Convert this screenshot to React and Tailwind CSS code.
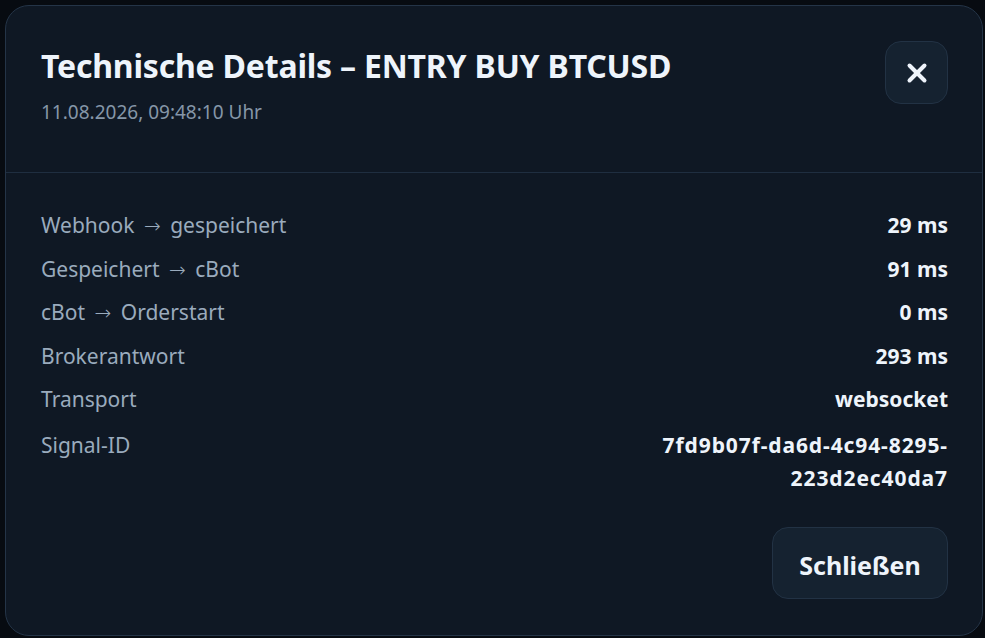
import React from 'react'
import { X } from 'lucide-react'

const rows = [
  { from: 'Webhook', to: 'gespeichert', value: '29 ms' },
  { from: 'Gespeichert', to: 'cBot', value: '91 ms' },
  { from: 'cBot', to: 'Orderstart', value: '0 ms' },
  { from: 'Brokerantwort', value: '293 ms' },
  { from: 'Transport', value: 'websocket' },
  { from: 'Signal-ID', value: '7fd9b07f-da6d-4c94-8295-223d2ec40da7', id: true },
]

export default function App() {
  return (
    <div
      className="min-h-screen bg-[#070b11] p-[5px] text-[#eef4fb]"
      style={{ fontFamily: '"Noto Sans", "Open Sans", sans-serif' }}
    >
      <div className="h-[631px] w-[978px] rounded-[24px] border border-[#243447] bg-[#0f1824] flex flex-col">
        {/* Header */}
        <div className="flex h-[167px] items-start justify-between border-b border-[#1f2e40] pl-[35px] pr-[34px] pt-[35px]">
          <div className="pt-[5px]">
            <h2 className="text-[32px] font-bold leading-[40px] tracking-[-0.2px]">
              Technische Details – ENTRY BUY BTCUSD
            </h2>
            <p className="mt-[13px] text-[19px] leading-[26px] text-[#8596a8]">11.08.2026, 09:48:10 Uhr</p>
          </div>
          <button className="flex h-[63px] w-[63px] items-center justify-center rounded-[16px] border border-[#223244] bg-[#152230] text-[#eef4fb]">
            <X className="h-[30px] w-[30px]" strokeWidth={3.2} />
          </button>
        </div>

        {/* Body */}
        <div className="flex flex-col gap-[10.5px] pl-[35px] pr-[34px] pt-[36px]">
          {rows.map((r) => (
            <div
              key={r.from}
              className={`flex items-start justify-between text-[21px] leading-[33px] ${r.id ? 'mt-[2.5px]' : ''}`}
            >
              <span className="text-[#9aabbd]">
                {r.from}
                {r.to && (
                  <>
                    {' '}
                    <span
                      style={{ fontFamily: '"DejaVu Sans", sans-serif' }}
                      className="mx-[4px] text-[20px] font-light leading-none"
                    >
                      →
                    </span>
                    {' '}
                    {r.to}
                  </>
                )}
              </span>
              <span className={`max-w-[300px] text-right font-bold ${r.id ? 'tracking-[0.9px]' : ''}`}>
                {r.value}
              </span>
            </div>
          ))}
        </div>

        <div className="mt-auto flex justify-end pl-[35px] pr-[34px] pb-[36px]">
          <button className="h-[72px] w-[176px] rounded-[16px] border border-[#223244] bg-[#152230] pt-[5px] text-[25px] font-bold text-[#eef4fb]">
            Schließen
          </button>
        </div>
      </div>
    </div>
  )
}
